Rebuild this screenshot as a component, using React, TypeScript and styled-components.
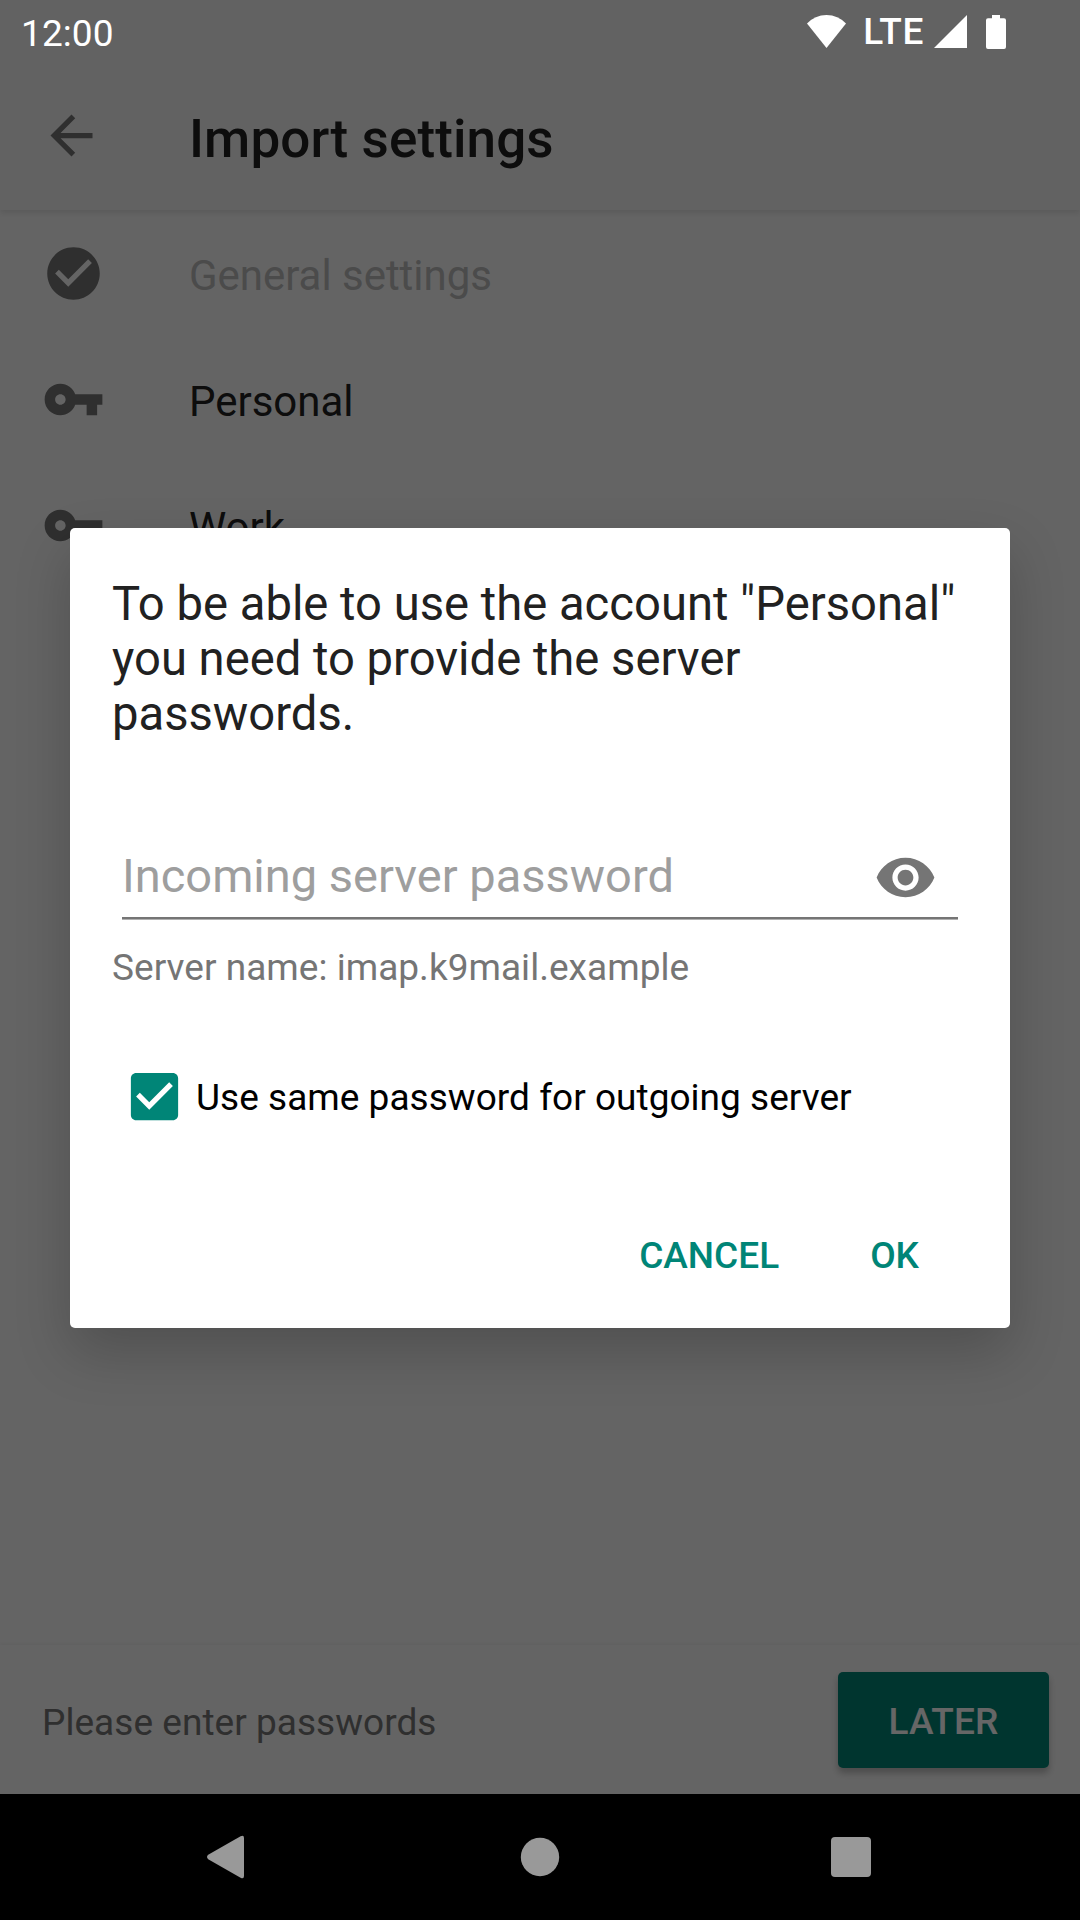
import React from "react";
import styled, { createGlobalStyle } from "styled-components";

const GlobalStyle = createGlobalStyle`
  *, *::before, *::after { box-sizing: border-box; }
  body { margin: 0; background: #000; }
`;

const Screen = styled.div`
  position: relative;
  display: flex;
  flex-direction: column;
  width: 1080px;
  height: 1920px;
  overflow: hidden;
  font-family: Roboto, "Liberation Sans", sans-serif;
  color: #212121;
`;

const Activity = styled.div`
  position: relative;
  display: flex;
  flex-direction: column;
  height: 1794px;
  background: #fafafa;
`;

const AppBar = styled.header`
  position: relative;
  display: flex;
  align-items: center;
  gap: 86px;
  height: 210px;
  padding: 63px 0 0 40px;
  background: #f5f5f5;
  box-shadow: 0 3px 6px rgba(0, 0, 0, 0.1);
`;

const BackIcon = styled.svg`
  width: 63px;
  height: 63px;
  margin-bottom: 2px;
  fill: #757575;
`;

const ScreenTitle = styled.h1`
  margin: 4px 0 0;
  font-size: 53px;
  line-height: 62px;
  font-weight: 500;
  letter-spacing: 0.1px;
`;

const SettingsList = styled.ul`
  flex: 1;
  margin: 0;
  padding: 0;
  list-style: none;
`;

const SettingsItem = styled.li<{ $disabled?: boolean }>`
  display: flex;
  align-items: center;
  gap: 84px;
  height: 126px;
  padding: 6px 42px 0;
  font-size: 42px;
  line-height: 50px;
  letter-spacing: -0.03px;
  color: ${(p) => (p.$disabled ? "#bbbbbb" : "#212121")};
`;

const ItemIcon = styled.svg`
  width: 63px;
  height: 63px;
  margin-top: -6px;
  fill: #757575;
`;

const BottomBar = styled.footer`
  display: flex;
  align-items: center;
  justify-content: space-between;
  height: 149px;
  padding: 0 31px 0 42px;
  background: #fafafa;
  box-shadow: 0 -1px 4px rgba(0, 0, 0, 0.06);
`;

const StatusText = styled.span`
  padding-top: 5px;
  font-size: 37px;
  line-height: 43px;
  letter-spacing: 0.04px;
  color: #757575;
`;

const LaterButton = styled.button`
  width: 211px;
  height: 96px;
  padding: 4px 0 0;
  border: 0;
  border-radius: 5px;
  background: #008577;
  color: #fff;
  font-family: inherit;
  font-size: 37px;
  font-weight: 500;
  line-height: 44px;
  letter-spacing: 0.1px;
  box-shadow: 0 5px 7px rgba(0, 0, 0, 0.25);
`;

const Scrim = styled.div`
  position: absolute;
  inset: 0 0 126px;
  display: flex;
  align-items: flex-start;
  justify-content: center;
  padding-top: 528px;
  background: rgba(0, 0, 0, 0.6);
`;

const Dialog = styled.section`
  display: flex;
  flex-direction: column;
  width: 940px;
  height: 800px;
  padding: 49px 42px 41px;
  border-radius: 5px;
  background: #fff;
  box-shadow: 0 24px 56px rgba(0, 0, 0, 0.2);
`;

const Message = styled.p`
  margin: 0;
  font-size: 47.2px;
  line-height: 55px;
`;

const PasswordField = styled.div`
  display: flex;
  align-items: center;
  justify-content: space-between;
  height: 85px;
  margin: 92px 10px 0;
  padding: 0 21px 0 0;
  border-bottom: 2px solid #757575;
  box-shadow: 0 1px 0 #b0b0b0;
`;

const Placeholder = styled.span`
  font-size: 47px;
  line-height: 55px;
  color: #9e9e9e;
`;

const EyeIcon = styled.svg`
  width: 63px;
  height: 63px;
  margin-top: 4px;
  fill: #757575;
`;

const ServerName = styled.p`
  margin: 27px 0 0;
  font-size: 37px;
  line-height: 43px;
  letter-spacing: 0.03px;
  color: #757575;
`;

const CheckRow = styled.label`
  display: flex;
  align-items: center;
  gap: 10.5px;
  height: 84px;
  margin: 66px 0 0 10.5px;
  font-size: 37px;
  line-height: 43px;
  letter-spacing: 0.03px;
  color: #000;
`;

const CheckIcon = styled.svg`
  width: 63px;
  height: 63px;
  margin-bottom: 2px;
  fill: #008577;
`;

const Actions = styled.div`
  display: flex;
  align-items: center;
  justify-content: flex-end;
  gap: 91px;
  margin-top: auto;
  height: 63px;
  padding-right: 49px;
`;

const TextButton = styled.button`
  padding: 0;
  border: 0;
  background: none;
  color: #008577;
  font-family: inherit;
  font-size: 37px;
  font-weight: 500;
  line-height: 43px;
`;

const StatusBar = styled.div`
  position: absolute;
  inset: 0 0 auto;
  display: flex;
  align-items: center;
  justify-content: space-between;
  height: 63px;
  padding: 0 74px 0 21px;
  color: #fff;
`;

const Clock = styled.time`
  padding-top: 3px;
  font-size: 37px;
  line-height: 43px;
  letter-spacing: 0.1px;
`;

const Indicators = styled.div`
  display: flex;
  align-items: center;
`;

const NetworkType = styled.span`
  margin: 0 10px 0 17px;
  font-size: 37px;
  font-weight: 500;
  line-height: 43px;
  letter-spacing: 0.6px;
`;

const Glyph = styled.svg<{ $gap?: number }>`
  display: block;
  margin-left: ${(p) => p.$gap ?? 0}px;
  fill: #fff;
`;

const NavigationBar = styled.nav`
  display: flex;
  align-items: center;
  justify-content: center;
  gap: 247px;
  height: 126px;
  background: #000;
`;

const NavIcon = styled.svg`
  width: 64px;
  height: 64px;
  fill: #999;
`;

const CHECK_CIRCLE =
  "M12 2C6.48 2 2 6.48 2 12s4.48 10 10 10 10-4.48 10-10S17.52 2 12 2zM10 17l-5-5 1.41-1.41L10 14.17l7.59-7.59L19 8l-9 9z";
const KEY =
  "M12.65 10C11.83 7.67 9.61 6 7 6c-3.31 0-6 2.69-6 6s2.69 6 6 6c2.61 0 4.83-1.67 5.65-4H17v4h4v-4h2v-4H12.65zM7 14c-1.1 0-2-.9-2-2s.9-2 2-2 2 .9 2 2-.9 2-2 2z";

const items = [
  { label: "General settings", icon: CHECK_CIRCLE, disabled: true },
  { label: "Personal", icon: KEY, disabled: false },
  { label: "Work", icon: KEY, disabled: false },
];

export default function App() {
  return (
    <Screen>
      <GlobalStyle />
      <Activity>
        <AppBar>
          <BackIcon viewBox="0 0 24 24">
            <path d="M20 11H7.83l5.59-5.59L12 4l-8 8 8 8 1.41-1.41L7.83 13H20v-2z" />
          </BackIcon>
          <ScreenTitle>Import settings</ScreenTitle>
        </AppBar>
        <SettingsList>
          {items.map((item) => (
            <SettingsItem key={item.label} $disabled={item.disabled}>
              <ItemIcon viewBox="0 0 24 24">
                <path d={item.icon} />
              </ItemIcon>
              {item.label}
            </SettingsItem>
          ))}
        </SettingsList>
        <BottomBar>
          <StatusText>Please enter passwords</StatusText>
          <LaterButton>LATER</LaterButton>
        </BottomBar>
      </Activity>

      <NavigationBar>
        <NavIcon viewBox="0 0 64 64">
          <path d="M11.2 29.8 43.6 11.2Q47 9.6 47 13V51Q47 54.4 43.6 52.8L11.2 34.2Q8.8 32 11.2 29.8Z" />
        </NavIcon>
        <NavIcon viewBox="0 0 64 64">
          <circle cx="32" cy="32" r="19.2" />
        </NavIcon>
        <NavIcon viewBox="0 0 64 64">
          <rect x="12" y="12" width="40" height="40" rx="4" />
        </NavIcon>
      </NavigationBar>

      <Scrim>
        <Dialog>
          <Message>
            To be able to use the account "Personal" you need to provide the server passwords.
          </Message>
          <PasswordField>
            <Placeholder>Incoming server password</Placeholder>
            <EyeIcon viewBox="0 0 24 24">
              <path d="M12 4.5C7 4.5 2.73 7.61 1 12c1.73 4.39 6 7.5 11 7.5s9.27-3.11 11-7.5c-1.73-4.39-6-7.5-11-7.5zM12 17c-2.76 0-5-2.24-5-5s2.24-5 5-5 5 2.24 5 5-2.24 5-5 5zm0-8c-1.66 0-3 1.34-3 3s1.34 3 3 3 3-1.34 3-3-1.34-3-3-3z" />
            </EyeIcon>
          </PasswordField>
          <ServerName>Server name: imap.k9mail.example</ServerName>
          <CheckRow>
            <CheckIcon viewBox="0 0 24 24">
              <path d="M19 3H5c-1.11 0-2 .9-2 2v14c0 1.1.89 2 2 2h14c1.11 0 2-.9 2-2V5c0-1.1-.89-2-2-2zm-9 14l-5-5 1.41-1.41L10 14.17l7.59-7.59L19 8l-9 9z" />
            </CheckIcon>
            Use same password for outgoing server
          </CheckRow>
          <Actions>
            <TextButton>CANCEL</TextButton>
            <TextButton>OK</TextButton>
          </Actions>
        </Dialog>
      </Scrim>

      <StatusBar>
        <Clock>12:00</Clock>
        <Indicators>
          <Glyph width="39" height="33" viewBox="0 0 39 33">
            <path d="M0 8.6Q8 0 19.5 0T39 8.6L19.5 33Z" />
          </Glyph>
          <NetworkType>LTE</NetworkType>
          <Glyph width="33" height="33" viewBox="0 0 33 33">
            <path d="M33 0V33H0Z" />
          </Glyph>
          <Glyph $gap={19} width="20" height="34" viewBox="0 0 20 34">
            <path d="M6 0H14V3.3H18Q20 3.3 20 5.3V32Q20 34 18 34H2Q0 34 0 32V5.3Q0 3.3 2 3.3H6Z" />
          </Glyph>
        </Indicators>
      </StatusBar>
    </Screen>
  );
}
